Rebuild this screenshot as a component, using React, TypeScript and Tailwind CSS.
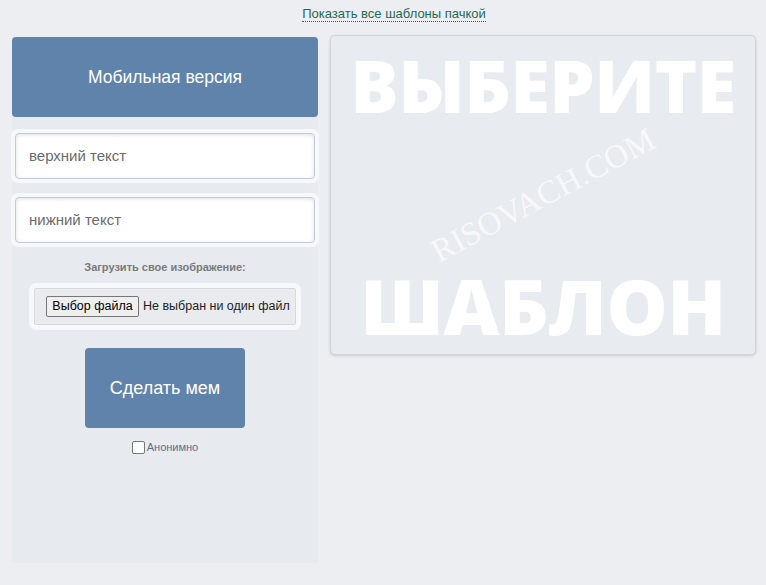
import React from "react";

export default function App() {
  return (
    <div className="w-[766px] h-[585px] bg-[#eceef2] font-['Liberation_Sans',Arial,sans-serif] overflow-hidden">
      <div className="h-[35px] pt-[1px] pl-[22px] text-center">
        <a className="text-[13px] leading-[15px] text-[#1d6b57] border-b border-dotted border-[#1d6b57] cursor-pointer">
          Показать все шаблоны пачкой
        </a>
      </div>
      <div className="flex items-start">
        <div className="ml-[12px] mt-[2px] w-[306px] h-[526px] bg-[#e7eaef] flex flex-col items-center">
          <div className="w-full h-[80px] rounded-[4px] bg-[#5f83ab] flex items-center justify-center text-white text-[17.5px]">
            Мобильная версия
          </div>
          <div className="mt-[12px] w-[308px] h-[54px] rounded-[7px] bg-[#f7f8fa] p-[4px]">
            <div className="h-[46px] rounded-[4px] border border-[#c4c9d3] bg-white shadow-[inset_0_1px_4px_rgba(0,0,0,0.12)] flex items-center pl-[13px] text-[15px] text-[#6b6b6b]">
              верхний текст
            </div>
          </div>
          <div className="mt-[10px] w-[308px] h-[54px] rounded-[7px] bg-[#f7f8fa] p-[4px]">
            <div className="h-[46px] rounded-[4px] border border-[#c4c9d3] bg-white shadow-[inset_0_1px_4px_rgba(0,0,0,0.12)] flex items-center pl-[13px] text-[15px] text-[#6b6b6b]">
              нижний текст
            </div>
          </div>
          <div className="mt-[14px] h-[13px] text-[11px] leading-[13px] font-bold text-[#7a7a7a]">
            Загрузить свое изображение:
          </div>
          <div className="mt-[9px] w-[272px] h-[47px] rounded-[7px] bg-[#f7f8fa] p-[5px]">
            <div className="h-[37px] rounded-[2px] border border-[#d6d9de] bg-[#e9ebef] flex items-center pl-[11px] text-[12.5px] whitespace-nowrap">
              <span className="h-[21px] w-[93px] border border-[#767676] rounded-[2px] bg-[#efefef] text-black flex items-center justify-center">
                Выбор файла
              </span>
              <span className="ml-[4px] text-[#222]">Не выбран ни один файл</span>
            </div>
          </div>
          <div className="mt-[18px] w-[160px] h-[80px] rounded-[4px] bg-[#5f83ab] flex items-center justify-center text-white text-[18px]">
            Сделать мем
          </div>
          <label className="mt-[13px] flex items-center">
            <span className="w-[13px] h-[13px] rounded-[2px] border border-[#767676] bg-white"></span>
            <span className="ml-[2px] text-[11px] leading-[13px] text-[#5b6f8c]">Анонимно</span>
          </label>
        </div>
        <div className="relative ml-[12px] w-[426px] h-[320px] rounded-[5px] border border-[#cfd3da] bg-[#e8ebf0] shadow-[0_1px_3px_rgba(0,0,0,0.15)] overflow-hidden flex flex-col items-center">
          <div className="mt-[6px] font-['Open_Sans',sans-serif] font-extrabold text-white text-[72px] leading-[86px] tracking-[-0.5px]">
            ВЫБЕРИТЕ
          </div>
          <div className="mt-auto mb-[8px] font-['Open_Sans',sans-serif] font-extrabold text-white text-[77px] leading-[80px] tracking-[-0.5px]">
            ШАБЛОН
          </div>
          <div className="absolute left-1/2 top-1/2 -translate-x-1/2 -translate-y-1/2 -rotate-[28deg] font-['Liberation_Serif',serif] text-[33px] leading-[36px] text-white/70 whitespace-nowrap">
            RISOVACH.COM
          </div>
        </div>
      </div>
    </div>
  );
}
